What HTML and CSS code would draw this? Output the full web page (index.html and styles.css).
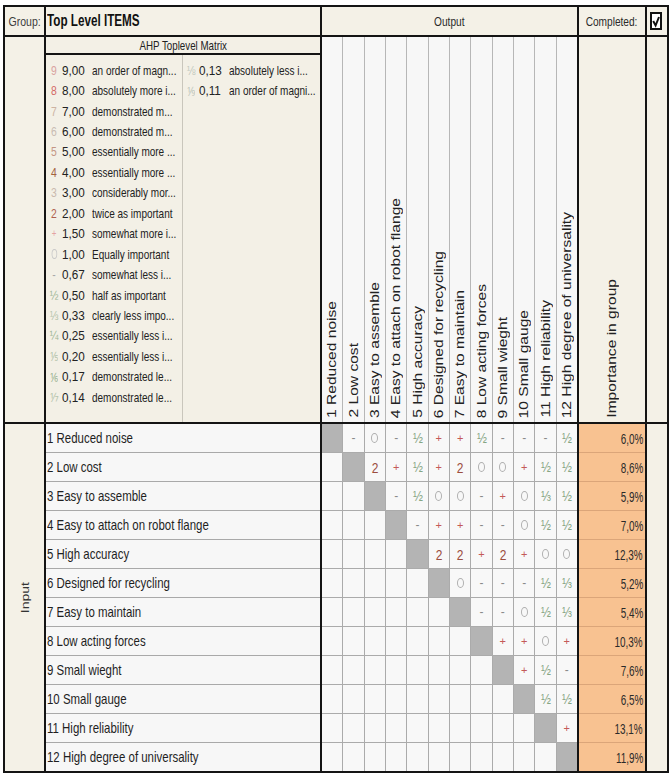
FILE: index.html
```html
<!DOCTYPE html>
<html lang="en">
<head>
<meta charset="utf-8">
<title>AHP Toplevel Matrix</title>
<link rel="stylesheet" href="styles.css">
</head>
<body>
<div class="frame">
  <div class="hdr grp"><span class="tx">Group:</span></div>
  <div class="hdr title"><span class="tx">Top Level ITEMS</span></div>
  <div class="hdr center"><span class="tx">Output</span></div>
  <div class="hdr center"><span class="tx">Completed:</span></div>
  <div class="hdr center">
    <svg class="checkbox" width="12" height="18" viewBox="0 0 12 18"><rect x="1" y="1" width="10" height="16" fill="#fff" stroke="#111" stroke-width="2"/><polyline points="3.2,9 5.6,13.5 9,5" fill="none" stroke="#111" stroke-width="2"/></svg>
  </div>

  <div class="side"></div>
  <div class="legend">
    <div class="legend-title"><span class="tx">AHP Toplevel Matrix</span></div>
    <div class="legend-body">
      <div class="legend-col first">
        <div class="li"><span class="sym c9">9</span><span class="val">9,00</span><span class="desc">an order of magn...</span></div>
        <div class="li"><span class="sym c8">8</span><span class="val">8,00</span><span class="desc">absolutely more i...</span></div>
        <div class="li"><span class="sym c7">7</span><span class="val">7,00</span><span class="desc">demonstrated m...</span></div>
        <div class="li"><span class="sym c6">6</span><span class="val">6,00</span><span class="desc">demonstrated m...</span></div>
        <div class="li"><span class="sym c5">5</span><span class="val">5,00</span><span class="desc">essentially more ...</span></div>
        <div class="li"><span class="sym c4">4</span><span class="val">4,00</span><span class="desc">essentially more ...</span></div>
        <div class="li"><span class="sym c3">3</span><span class="val">3,00</span><span class="desc">considerably mor...</span></div>
        <div class="li"><span class="sym c2">2</span><span class="val">2,00</span><span class="desc">twice as important</span></div>
        <div class="li"><span class="sym cp">+</span><span class="val">1,50</span><span class="desc">somewhat more i...</span></div>
        <div class="li"><span class="sym"><span class="ring light"></span></span><span class="val">1,00</span><span class="desc">Equally important</span></div>
        <div class="li"><span class="sym cm">-</span><span class="val">0,67</span><span class="desc">somewhat less i...</span></div>
        <div class="li"><span class="sym cf1">½</span><span class="val">0,50</span><span class="desc">half as important</span></div>
        <div class="li"><span class="sym cf2">⅓</span><span class="val">0,33</span><span class="desc">clearly less impo...</span></div>
        <div class="li"><span class="sym cf1">¼</span><span class="val">0,25</span><span class="desc">essentially less i...</span></div>
        <div class="li"><span class="sym cf2">⅕</span><span class="val">0,20</span><span class="desc">essentially less i...</span></div>
        <div class="li"><span class="sym cf1">⅙</span><span class="val">0,17</span><span class="desc">demonstrated le...</span></div>
        <div class="li"><span class="sym cf2">⅐</span><span class="val">0,14</span><span class="desc">demonstrated le...</span></div>
      </div>
      <div class="legend-col">
        <div class="li"><span class="sym cf3">⅛</span><span class="val">0,13</span><span class="desc">absolutely less i...</span></div>
        <div class="li"><span class="sym cf3">⅑</span><span class="val">0,11</span><span class="desc">an order of magni...</span></div>
      </div>
    </div>
  </div>
  <div class="colheads">
    <div class="ch"><span class="vt">1 Reduced noise</span></div>
    <div class="ch"><span class="vt">2 Low cost</span></div>
    <div class="ch"><span class="vt">3 Easy to assemble</span></div>
    <div class="ch"><span class="vt">4 Easy to attach on robot flange</span></div>
    <div class="ch"><span class="vt">5 High accuracy</span></div>
    <div class="ch"><span class="vt">6 Designed for recycling</span></div>
    <div class="ch"><span class="vt">7 Easy to maintain</span></div>
    <div class="ch"><span class="vt">8 Low acting forces</span></div>
    <div class="ch"><span class="vt">9 Small wieght</span></div>
    <div class="ch"><span class="vt">10 Small gauge</span></div>
    <div class="ch"><span class="vt">11 High reliability</span></div>
    <div class="ch"><span class="vt">12 High degree of universality</span></div>
  </div>
  <div class="imphead"><span class="vt">Importance in group</span></div>
  <div class="side"></div>

  <div class="side input"><span class="vt small">Input</span></div>
  <div class="labels">
    <div class="lab"><span>1 Reduced noise</span></div>
    <div class="lab"><span>2 Low cost</span></div>
    <div class="lab"><span>3 Easy to assemble</span></div>
    <div class="lab"><span>4 Easy to attach on robot flange</span></div>
    <div class="lab"><span>5 High accuracy</span></div>
    <div class="lab"><span>6 Designed for recycling</span></div>
    <div class="lab"><span>7 Easy to maintain</span></div>
    <div class="lab"><span>8 Low acting forces</span></div>
    <div class="lab"><span>9 Small wieght</span></div>
    <div class="lab"><span>10 Small gauge</span></div>
    <div class="lab"><span>11 High reliability</span></div>
    <div class="lab"><span>12 High degree of universality</span></div>
  </div>
  <div class="matrix">
    <span class="m d"></span><span class="m"><i class="mi">-</i></span><span class="m"><i class="ring"></i></span><span class="m"><i class="mi">-</i></span><span class="m"><i class="hf">½</i></span><span class="m"><i class="pl">+</i></span><span class="m"><i class="pl">+</i></span><span class="m"><i class="hf">½</i></span><span class="m"><i class="mi">-</i></span><span class="m"><i class="mi">-</i></span><span class="m"><i class="mi">-</i></span><span class="m"><i class="hf">½</i></span>
    <span class="m"></span><span class="m d"></span><span class="m"><i class="tw">2</i></span><span class="m"><i class="pl">+</i></span><span class="m"><i class="hf">½</i></span><span class="m"><i class="pl">+</i></span><span class="m"><i class="tw">2</i></span><span class="m"><i class="ring"></i></span><span class="m"><i class="ring"></i></span><span class="m"><i class="pl">+</i></span><span class="m"><i class="hf">½</i></span><span class="m"><i class="hf">½</i></span>
    <span class="m"></span><span class="m"></span><span class="m d"></span><span class="m"><i class="mi">-</i></span><span class="m"><i class="hf">½</i></span><span class="m"><i class="ring"></i></span><span class="m"><i class="ring"></i></span><span class="m"><i class="mi">-</i></span><span class="m"><i class="pl">+</i></span><span class="m"><i class="ring"></i></span><span class="m"><i class="hf">⅓</i></span><span class="m"><i class="hf">½</i></span>
    <span class="m"></span><span class="m"></span><span class="m"></span><span class="m d"></span><span class="m"><i class="mi">-</i></span><span class="m"><i class="pl">+</i></span><span class="m"><i class="pl">+</i></span><span class="m"><i class="mi">-</i></span><span class="m"><i class="mi">-</i></span><span class="m"><i class="ring"></i></span><span class="m"><i class="hf">½</i></span><span class="m"><i class="hf">½</i></span>
    <span class="m"></span><span class="m"></span><span class="m"></span><span class="m"></span><span class="m d"></span><span class="m"><i class="tw">2</i></span><span class="m"><i class="tw">2</i></span><span class="m"><i class="pl">+</i></span><span class="m"><i class="tw">2</i></span><span class="m"><i class="pl">+</i></span><span class="m"><i class="ring"></i></span><span class="m"><i class="ring"></i></span>
    <span class="m"></span><span class="m"></span><span class="m"></span><span class="m"></span><span class="m"></span><span class="m d"></span><span class="m"><i class="ring"></i></span><span class="m"><i class="mi">-</i></span><span class="m"><i class="mi">-</i></span><span class="m"><i class="mi">-</i></span><span class="m"><i class="hf">½</i></span><span class="m"><i class="hf">⅓</i></span>
    <span class="m"></span><span class="m"></span><span class="m"></span><span class="m"></span><span class="m"></span><span class="m"></span><span class="m d"></span><span class="m"><i class="mi">-</i></span><span class="m"><i class="mi">-</i></span><span class="m"><i class="ring"></i></span><span class="m"><i class="hf">½</i></span><span class="m"><i class="hf">⅓</i></span>
    <span class="m"></span><span class="m"></span><span class="m"></span><span class="m"></span><span class="m"></span><span class="m"></span><span class="m"></span><span class="m d"></span><span class="m"><i class="pl">+</i></span><span class="m"><i class="pl">+</i></span><span class="m"><i class="ring"></i></span><span class="m"><i class="pl">+</i></span>
    <span class="m"></span><span class="m"></span><span class="m"></span><span class="m"></span><span class="m"></span><span class="m"></span><span class="m"></span><span class="m"></span><span class="m d"></span><span class="m"><i class="pl">+</i></span><span class="m"><i class="hf">½</i></span><span class="m"><i class="mi">-</i></span>
    <span class="m"></span><span class="m"></span><span class="m"></span><span class="m"></span><span class="m"></span><span class="m"></span><span class="m"></span><span class="m"></span><span class="m"></span><span class="m d"></span><span class="m"><i class="hf">½</i></span><span class="m"><i class="hf">½</i></span>
    <span class="m"></span><span class="m"></span><span class="m"></span><span class="m"></span><span class="m"></span><span class="m"></span><span class="m"></span><span class="m"></span><span class="m"></span><span class="m"></span><span class="m d"></span><span class="m"><i class="pl">+</i></span>
    <span class="m"></span><span class="m"></span><span class="m"></span><span class="m"></span><span class="m"></span><span class="m"></span><span class="m"></span><span class="m"></span><span class="m"></span><span class="m"></span><span class="m"></span><span class="m d"></span>
  </div>
  <div class="pcts">
    <div class="pc"><span>6,0%</span></div>
    <div class="pc"><span>8,6%</span></div>
    <div class="pc"><span>5,9%</span></div>
    <div class="pc"><span>7,0%</span></div>
    <div class="pc"><span>12,3%</span></div>
    <div class="pc"><span>5,2%</span></div>
    <div class="pc"><span>5,4%</span></div>
    <div class="pc"><span>10,3%</span></div>
    <div class="pc"><span>7,6%</span></div>
    <div class="pc"><span>6,5%</span></div>
    <div class="pc"><span>13,1%</span></div>
    <div class="pc"><span>11,9%</span></div>
  </div>
  <div class="side"></div>
</div>
</body>
</html>
```
FILE: styles.css
```css
html, body {
  margin: 0;
  background: #ffffff;
}
body {
  font-family: "Liberation Sans", Arial, sans-serif;
  font-size: 14px;
  color: #1f1f1f;
}
/* the source UI uses a tall, condensed face: emulate with a horizontal squeeze */
.tx, .lab span, .pc span, .val, .desc, .sym, .m i {
  display: inline-block;
  white-space: nowrap;
  flex-shrink: 0;
}
.frame {
  margin: 5px 0 0 3px;
  width: 666px;
  box-sizing: border-box;
  display: grid;
  grid-template-columns: 39px 274px 255px 66px 20px;
  grid-template-rows: 28px 385px 347px;
  gap: 2px;
  padding: 2px;
  background: #141414;
}
.hdr {
  background: #f4f1e7;
  display: flex;
  align-items: center;
  overflow: hidden;
}
.center { justify-content: center; }
.hdr .tx {
  font-size: 13.5px;
  color: #2a2a2a;
  transform: scaleX(0.75);
}
.grp { justify-content: center; }
.grp .tx { color: #3c3c3c; transform: scaleX(0.78); }
.title { padding-left: 1px; }
.title .tx {
  font-weight: bold;
  font-size: 16px;
  color: #111;
  transform: scaleX(0.73);
  transform-origin: 0 50%;
}
.checkbox { display: block; margin-left: -2px; }
.side { background: #f4f1e7; }

/* legend */
.legend {
  background: #f3f0e6;
  display: flex;
  flex-direction: column;
  min-width: 0;
}
.legend-title {
  height: 16px;
  display: flex;
  align-items: center;
  justify-content: center;
  border-bottom: 2px solid #141414;
}
.legend-title .tx {
  font-size: 13px;
  color: #222;
  transform: scaleX(0.75);
}
.legend-body {
  flex: 1;
  display: grid;
  grid-template-columns: 137px minmax(0, 1fr);
}
.legend-col { padding-top: 5px; overflow: hidden; }
.legend-col.first { border-right: 1px solid #c9c6bc; }
.li {
  height: 20.44px;
  display: flex;
  align-items: center;
  color: #222;
}
.sym {
  width: 14px;
  margin-left: 1px;
  text-align: center;
  font-size: 13px;
  transform: scaleX(0.8);
}
.val {
  width: 30px;
  padding-left: 1px;
  font-size: 13px;
  transform: scaleX(0.9);
  transform-origin: 0 50%;
}
.desc {
  font-size: 13.5px;
  transform: scaleX(0.74);
  transform-origin: 0 50%;
}
.c9 { color: #d9a3a0; }
.c8 { color: #d36a66; }
.c7 { color: #cdb3a2; }
.c6 { color: #c9bcb3; }
.c5 { color: #c39684; }
.c4 { color: #a2623f; }
.c3 { color: #c9b8ad; }
.c2 { color: #b0604e; }
.cp { color: #e4a3a3; font-size: 10px; }
.cm { color: #a8a8a8; }
.cf1 { color: #9cb595; }
.cf2 { color: #b5c4ac; }
.cf3 { color: #bfc7bd; }

/* column headers */
.colheads {
  display: grid;
  grid-template-columns: repeat(12, 1fr);
  gap: 1px;
  background: #b7b7b7;
}
.ch {
  background: #f7f7f7;
  display: flex;
  flex-direction: column;
  justify-content: flex-end;
  align-items: center;
  padding-bottom: 4px;
}
.imphead {
  background: #f4f1e7;
  display: flex;
  flex-direction: column;
  justify-content: flex-end;
  align-items: center;
  padding-bottom: 4px;
}
.vt {
  writing-mode: vertical-rl;
  transform: rotate(180deg) scaleX(0.8);
  white-space: nowrap;
  font-size: 15.6px;
  line-height: 1;
  color: #222;
}
.input {
  display: flex;
  align-items: center;
  justify-content: center;
}
.vt.small { font-size: 14px; color: #333; }

/* rows */
.labels {
  display: flex;
  flex-direction: column;
  gap: 1px;
  background: #a9a9a9;
  min-width: 0;
}
.lab {
  flex: 1;
  background: #f7f7f7;
  display: flex;
  align-items: center;
  padding-left: 1px;
  overflow: hidden;
}
.lab span {
  font-size: 14.5px;
  color: #1f1f1f;
  transform: scaleX(0.79);
  transform-origin: 0 50%;
}
.matrix {
  display: grid;
  grid-template-columns: repeat(12, 1fr);
  grid-template-rows: repeat(12, 1fr);
  gap: 1px;
  background: #ababab;
}
.m {
  background: #f8f8f8;
  display: flex;
  align-items: center;
  justify-content: center;
}
.m.d { background: #b4b4b4; }
.m i { font-style: normal; }
.mi { color: #8a8a8a; font-size: 12px; }
.pl { color: #c45a58; font-size: 11px; }
.m .tw { color: #9c4d3e; font-size: 15px; transform: scaleX(0.8); }
.m .hf { color: #86a584; font-size: 14px; transform: scaleX(0.85); }
.ring {
  display: inline-block;
  width: 7px;
  height: 10px;
  box-sizing: border-box;
  border: 1px solid #b0b0b0;
  border-radius: 50%;
}
.ring.light { border-color: #c9c9c9; }
.pcts {
  display: flex;
  flex-direction: column;
  gap: 1px;
  background: #dba579;
  min-width: 0;
}
.pc {
  flex: 1;
  background: #f8c291;
  display: flex;
  align-items: center;
  justify-content: flex-end;
  padding-right: 2px;
  overflow: hidden;
}
.pc span {
  font-size: 15px;
  color: #2a2a2a;
  transform: scaleX(0.66);
  transform-origin: 100% 50%;
}
```
